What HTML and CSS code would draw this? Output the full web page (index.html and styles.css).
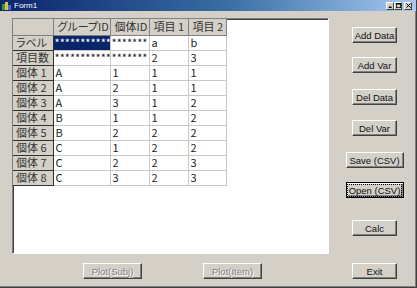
FILE: index.html
```html
<!DOCTYPE html>
<html lang="ja">
<head>
  <meta charset="UTF-8">
  <title>Form1</title>
  <link rel="stylesheet" href="styles.css">
</head>
<body>
  <div class="window">
    <div class="titlebar">
      <svg class="app-icon" width="9" height="9" viewBox="0 0 9 9">
        <rect x="0" y="3" width="3" height="6" fill="#3a9a3a"/>
        <rect x="3" y="1" width="3" height="8" fill="#e0c040"/>
        <rect x="6" y="4" width="3" height="5" fill="#4070d0"/>
      </svg>
      <span class="title">Form1</span>
      <div class="controls">
        <span class="ctl"><svg width="7" height="7" viewBox="0 0 7 7"><rect x="1" y="5" width="4" height="2" fill="#000"/></svg></span>
        <span class="ctl"><svg width="7" height="7" viewBox="0 0 7 7"><rect x="0.5" y="0.5" width="6" height="6" fill="none" stroke="#000"/><rect x="0" y="0" width="7" height="2" fill="#000"/></svg></span>
        <span class="ctl close"><svg width="7" height="7" viewBox="0 0 7 7"><path d="M0.5 0.5 L6.5 6.5 M6.5 0.5 L0.5 6.5" stroke="#000" stroke-width="1.4"/></svg></span>
      </div>
    </div>

    <div class="client">
      <div class="main">
        <div class="grid-panel">
          <table class="grid">
            <colgroup>
              <col class="c-head"><col class="c-group"><col class="c-id"><col class="c-item"><col class="c-item2">
            </colgroup>
            <tr>
              <th class="corner"></th>
              <th>グループID</th>
              <th>個体ID</th>
              <th>項目 1</th>
              <th>項目 2</th>
            </tr>
            <tr>
              <th class="rowhead">ラベル</th>
              <td class="selected stars">***********</td>
              <td class="stars">*******</td>
              <td>a</td>
              <td>b</td>
            </tr>
            <tr>
              <th class="rowhead">項目数</th>
              <td class="stars">***********</td>
              <td class="stars">*******</td>
              <td>2</td>
              <td>3</td>
            </tr>
            <tr><th class="rowhead">個体 1</th><td>A</td><td>1</td><td>1</td><td>1</td></tr>
            <tr><th class="rowhead">個体 2</th><td>A</td><td>2</td><td>1</td><td>1</td></tr>
            <tr><th class="rowhead">個体 3</th><td>A</td><td>3</td><td>1</td><td>2</td></tr>
            <tr><th class="rowhead">個体 4</th><td>B</td><td>1</td><td>1</td><td>2</td></tr>
            <tr><th class="rowhead">個体 5</th><td>B</td><td>2</td><td>2</td><td>2</td></tr>
            <tr><th class="rowhead">個体 6</th><td>C</td><td>1</td><td>2</td><td>2</td></tr>
            <tr><th class="rowhead">個体 7</th><td>C</td><td>2</td><td>2</td><td>3</td></tr>
            <tr><th class="rowhead">個体 8</th><td>C</td><td>3</td><td>2</td><td>3</td></tr>
          </table>
        </div>

        <div class="side">
          <button class="btn b-add-data">Add Data</button>
          <button class="btn b-add-var">Add Var</button>
          <button class="btn b-del-data">Del Data</button>
          <button class="btn b-del-var">Del Var</button>
          <button class="btn wide b-save">Save (CSV)</button>
          <button class="btn wide default b-open"><span class="focus">Open (CSV)</span></button>
          <button class="btn b-calc">Calc</button>
        </div>
      </div>

      <div class="footer">
        <button class="btn plot b-plot-subj" disabled>Plot(Subj)</button>
        <button class="btn plot b-plot-item" disabled>Plot(Item)</button>
        <button class="btn b-exit">Exit</button>
      </div>
    </div>
  </div>
</body>
</html>
```

FILE: styles.css
```css
body {
    margin: 0;
    background-color: #d4d0c8;
    font-family: "Liberation Sans", Arial, sans-serif;
}
.window {
    width: 417px;
    height: 288px;
    box-sizing: border-box;
    background-color: #d4d0c8;
    border-right: 1px solid #404040;
    border-bottom: 1px solid #404040;
    box-shadow: inset -1px -1px 0 #808080;
    overflow: hidden;
}

/* title bar */
.titlebar {
    height: 11px;
    display: flex;
    align-items: center;
    padding-left: 2px;
    background: linear-gradient(to right, #0a246a, #3a6ea5 55%, #a6caf0);
    color: #fff;
}
.app-icon {
    margin-right: 3px;
}
.title {
    font-size: 8px;
    line-height: 11px;
}
.controls {
    margin-left: auto;
    margin-right: 4px;
    display: flex;
    align-items: center;
}
.ctl {
    width: 8px;
    height: 8px;
    box-sizing: border-box;
    background-color: #d4d0c8;
    border: 1px solid;
    border-color: #fff #404040 #404040 #fff;
    display: flex;
    align-items: center;
    justify-content: center;
}
.ctl svg {
    width: 5px;
    height: 5px;
}
.ctl.close {
    margin-left: 2px;
}

/* client area */
.client {
    padding: 7px 0 0 12px;
}
.main {
    display: flex;
}
.grid-panel {
    width: 317px;
    height: 236px;
    box-sizing: border-box;
    background-color: #fff;
    border: 1px solid;
    border-color: #808080 #fff #fff #808080;
    box-shadow: inset 1px 1px 0 #404040;
}
.grid {
    width: 213px;
    border-collapse: collapse;
    table-layout: fixed;
    font-family: "Noto Sans CJK JP", sans-serif;
    font-feature-settings: "palt";
    font-size: 11px;
    color: #222;
}
.c-head { width: 40px; }
.c-group { width: 57px; }
.c-id { width: 39px; }
.c-item { width: 39px; }
.c-item2 { width: 38px; }
.grid tr {
    height: 15px;
}
.grid tr:first-child {
    height: 16px;
}
.grid th,
.grid td {
    padding: 0 0 0 2px;
    line-height: 13px;
    white-space: nowrap;
    overflow: hidden;
    text-align: left;
}
.grid td {
    border-right: 1px solid #c8c8c8;
    border-bottom: 1px solid #c8c8c8;
}
.grid td.stars {
    padding-left: 1px;
}
.grid th {
    background-color: #d4d0c8;
    font-weight: normal;
    border-right: 1px solid #808080;
    border-bottom: 1px solid #808080;
    color: #333;
    padding-left: 4px;
}
.grid th.rowhead {
    border-right: 1px solid #303030;
    border-bottom: 1px solid #303030;
    padding-left: 3px;
}
.grid td.selected {
    background-color: #0a246a;
    color: #fff;
}

/* buttons */
.btn {
    font-family: "Liberation Sans", Arial, sans-serif;
    font-size: 9.5px;
    color: #111;
    background-color: #d4d0c8;
    height: 16px;
    width: 45px;
    padding: 0;
    white-space: nowrap;
    flex-shrink: 0;
    border: 1px solid;
    border-color: #fff #404040 #404040 #fff;
    box-shadow: inset -1px -1px 0 #808080;
    box-sizing: border-box;
}
.btn.wide {
    width: 58px;
}
.btn.default {
    border-color: #000;
    box-shadow: inset 1px 1px 0 #fff, inset -2px -2px 0 #808080;
}
.btn .focus {
    outline: 1px dotted #000;
    padding: 0 1px;
}
.btn.plot {
    width: 59px;
    color: #808080;
    text-shadow: 1px 1px 0 #fff;
}
.side {
    margin-left: 23px;
    width: 45px;
    display: flex;
    flex-direction: column;
    align-items: center;
}
.b-add-data { margin-top: 9px; }
.b-add-var { margin-top: 14px; }
.b-del-data { margin-top: 16px; }
.b-del-var { margin-top: 15px; }
.b-save { margin-top: 16px; }
.b-open { margin-top: 14px; }
.b-calc { margin-top: 22px; }

.footer {
    display: flex;
    margin-top: 9px;
}
.b-plot-subj { margin-left: 71px; }
.b-plot-item { margin-left: 61px; }
.b-exit { margin-left: 90px; }
```
